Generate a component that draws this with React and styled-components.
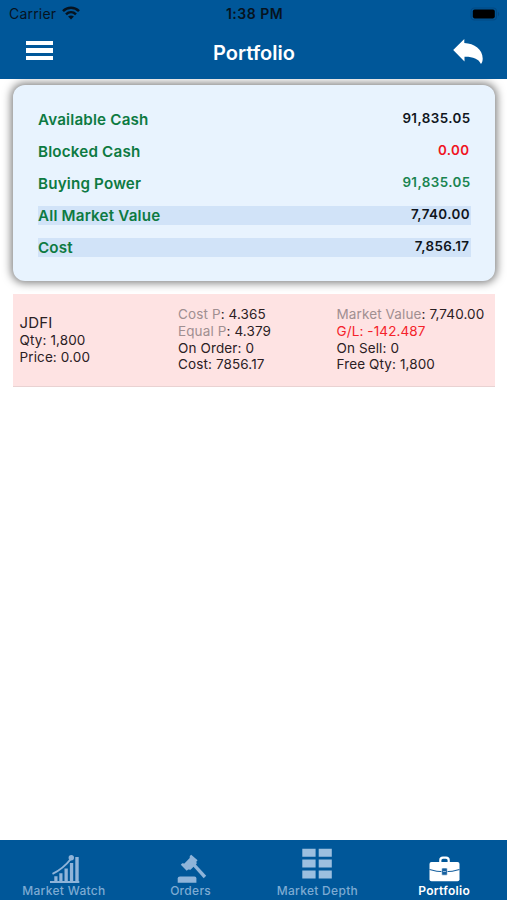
import React from 'react';
import styled, { createGlobalStyle } from 'styled-components';

const balances = [
  { label: 'Available Cash', value: '91,835.05', color: '#10151c' },
  { label: 'Blocked Cash', value: '0.00', color: '#f0141e', inset: 1 },
  { label: 'Buying Power', value: '91,835.05', color: '#198450' },
  { label: 'All Market Value', value: '7,740.00', color: '#10151c', inset: 0.5, marked: true },
  { label: 'Cost', value: '7,856.17', color: '#10151c', inset: 1, marked: true },
];

const WifiIcon = () => (
  <svg width="18" height="14" viewBox="0 0 18 14">
    <g fill="none" stroke="#06131f" strokeWidth="2.5">
      <path d="M1 5.2C5.5 .7 12.5 .7 17 5.2" />
      <path d="M4 8.4c2.9-2.8 7.1-2.8 10 0" />
    </g>
    <path d="M6.1 10.5c1.7-1.5 4.1-1.5 5.8 0L9 13.5z" fill="#06131f" />
  </svg>
);

const BatteryIcon = () => (
  <svg width="30" height="14" viewBox="0 0 30 14">
    <rect x="1" y="1" width="25.5" height="12" rx="3.5" fill="none" stroke="#034a83" strokeWidth="1.1" />
    <rect x="2.8" y="2.6" width="22" height="8.8" rx="1.8" fill="#000" />
    <path d="M28 4.8c1.6.7 1.6 3.7 0 4.4z" fill="#034a83" />
  </svg>
);

const BackIcon = () => (
  <svg width="32" height="28" viewBox="0 0 32 28">
    <path d="M1.2 12L12.300 1v4C22.500 5.300 30.600 11.500 30.700 20.500c0 2-.4 3.900-1.700 5.500C26.300 20.500 20.500 18.600 12.500 18.800v4.800z" fill="#fff" />
  </svg>
);

const ChartIcon = () => (
  <svg width="30" height="30" viewBox="0 0 30 30">
    <path d="M0 27h29.300v1.900H0zM4.300 22.300h3.200v4.900H4.300zM9.300 19.300h3.200v7.900H9.300zM14.500 14.500h3.300v12.700h-3.300zM19.900 9h3.300v18.200h-3.300zM25.300 3h3.400v24.200h-3.400z" fill="#8fb4d9" />
    <path d="M2.500 19.800C10 16.500 16.500 10.500 21.300 4.500" fill="none" stroke="#8fb4d9" strokeWidth="2" />
    <circle cx="21.300" cy="3.700" r="2.700" fill="#8fb4d9" />
  </svg>
);

const GavelIcon = () => (
  <svg width="30" height="30" viewBox="0 0 30 30">
    <g fill="#8fb4d9">
      <path d="M14.200.8l6.400 5.500-1.200 1.300.3 2.200-6.200 6-2.300-.2-1.500 1.200-5.900-6 1.400-1.500 2.200.1 5.300-5.400.1-2z" />
      <path d="M14.700 10.800l2.300-2.300L29.200 21.800l-2.500 2.500z" />
      <path d="M3 22.500h14.500q1.900 0 1.900 1.900v4.400H.7v-4.400q0-1.900 2.300-1.900z" />
    </g>
  </svg>
);

const GridIcon = () => (
  <svg width="30" height="31" viewBox="0 0 30 31">
    <path d="M.3.700h13.300v8H.3zM16.700.700h13.100v8H16.700zM.3 11.500h13.300v8H.3zM16.700 11.500h13.100v8H16.700zM.3 22.500h13.300v8H.3zM16.700 22.500h13.100v8H16.700z" fill="#9cbfdf" />
  </svg>
);

const BriefcaseIcon = () => (
  <svg width="31" height="26" viewBox="0 0 31 26">
    <path d="M11.300 6.500V4.200Q11.300 1.600 14 1.600h3q2.700 0 2.700 2.600v2.300" fill="none" stroke="#fff" strokeWidth="2.200" />
    <rect x=".5" y="6" width="30" height="19.300" rx="2" fill="#fff" />
    <path d="M.5 13.400q7 2.400 15 2.400t15-2.400" fill="none" stroke="#155f9e" strokeWidth="1.100" />
    <rect x="12.700" y="12" width="5.600" height="7.200" rx="1" fill="#155f9e" stroke="#fff" strokeWidth=".6" />
    <path d="M14 15.500h3" stroke="#8fb4d9" strokeWidth="1" />
  </svg>
);

const tabs = [
  { name: 'Market Watch', Icon: ChartIcon, gap: 0, nudge: 2 },
  { name: 'Orders', Icon: GavelIcon, gap: 0, nudge: 2 },
  { name: 'Market Depth', Icon: GridIcon, gap: 5 },
  { name: 'Portfolio', Icon: BriefcaseIcon, gap: 2.5 },
];

export default function App() {
  return (
    <Screen>
      <GlobalStyle />
      <Header>
        <StatusBar>
          <Carrier>Carrier <WifiIcon /></Carrier>
          <Clock>1:38 PM</Clock>
          <Battery><BatteryIcon /></Battery>
        </StatusBar>
        <NavBar>
          <MenuButton aria-label="Menu"><i /><i /><i /></MenuButton>
          <Title>Portfolio</Title>
          <BackButton aria-label="Back"><BackIcon /></BackButton>
        </NavBar>
      </Header>
      <Content>
        <BalanceCard>
          {balances.map(({ label, value, color, inset, marked }) => (
            <BalanceRow key={ label } $marked={ marked }>
              <BalanceLabel>{ label }</BalanceLabel>
              <BalanceValue $color={ color } $inset={ inset }>{ value }</BalanceValue>
            </BalanceRow>
          ))}
        </BalanceCard>
        <Position>
          <Column>
            <Symbol>JDFI</Symbol>
            <Line>Qty: 1,800</Line>
            <Line>Price: 0.00</Line>
          </Column>
          <Column>
            <Line><Muted>Cost P</Muted>: 4.365</Line>
            <Line><Muted>Equal P</Muted>: 4.379</Line>
            <Line>On Order: 0</Line>
            <Line>Cost: 7856.17</Line>
          </Column>
          <Column>
            <Line><Muted>Market Value</Muted>: 7,740.00</Line>
            <Line $loss>G/L: -142.487</Line>
            <Line>On Sell: 0</Line>
            <Line>Free Qty: 1,800</Line>
          </Column>
        </Position>
      </Content>
      <TabBar>
        {tabs.map(({ name, Icon, gap, nudge }) => (
          <Tab key={ name } $active={ name === 'Portfolio' } $gap={ gap } $nudge={ nudge }>
            <Icon />
            <span>{ name }</span>
          </Tab>
        ))}
      </TabBar>
    </Screen>
  );
}

const GlobalStyle = createGlobalStyle`
  body {
    margin: 0;
    background: #fff;
    font-family: Inter, "Liberation Sans", sans-serif;
  }
  * {
    box-sizing: border-box;
  }
  svg {
    display: block;
    flex: none;
  }
`;

const Screen = styled.div`
  display: flex;
  flex-direction: column;
  height: 900px;
  overflow: hidden;
`;

const Header = styled.header`
  height: 79px;
  flex: none;
  background: #005799;
`;

const StatusBar = styled.div`
  display: grid;
  grid-template-columns: 1fr auto 1fr;
  align-items: center;
  height: 27px;
  padding: 0 7px 0 9px;
  color: #06131f;
`;
const Carrier = styled.div`
  display: flex;
  align-items: center;
  gap: 6px;
  font-size: 14px;
  letter-spacing: 0.2px;
  svg {
    margin-top: -2px;
  }
`;
const Clock = styled.div`
  font-size: 14px;
  font-weight: 600;
  letter-spacing: 0.5px;
`;
const Battery = styled.div`
  justify-self: end;
`;

const NavBar = styled.nav`
  display: grid;
  grid-template-columns: 1fr auto 1fr;
  align-items: center;
  height: 50px;
  padding: 0 23px 0 26px;
`;
const MenuButton = styled.button`
  display: flex;
  flex-direction: column;
  gap: 3px;
  width: 27px;
  padding: 0;
  margin-top: -3px;
  border: 0;
  background: none;
  i {
    height: 4.5px;
    background: #fff;
  }
`;
const Title = styled.h1`
  margin: 1px 2px 0 0;
  color: #fff;
  font-size: 20px;
  font-weight: 600;
`;
const BackButton = styled.button`
  justify-self: end;
  padding: 0;
  border: 0;
  background: none;
`;

const Content = styled.main`
  flex: 1;
  padding: 6px 12.5px 0 13px;
`;

const BalanceCard = styled.section`
  display: flex;
  flex-direction: column;
  gap: 13.3px;
  height: 196px;
  padding: 24.5px 24px 0 25px;
  border-radius: 12px;
  background: #e8f3fe;
  box-shadow: 0 0 9px 1.5px rgba(0, 0, 0, 0.5);
  clip-path: inset(-6px -20px -20px -20px);
`;
const BalanceRow = styled.div`
  display: flex;
  justify-content: space-between;
  height: 18.8px;
  background: ${({ $marked }) => $marked ? '#d1e3f8' : 'transparent'};
`;
const BalanceLabel = styled.span`
  color: #0d7a42;
  font-size: 15.2px;
  font-weight: 600;
  line-height: 20px;
  letter-spacing: 0.18px;
`;
const BalanceValue = styled.span`
  margin-right: ${({ $inset }) => $inset || 0}px;
  color: ${({ $color }) => $color};
  font-size: 13.4px;
  font-weight: 600;
  line-height: 17px;
  letter-spacing: 0.4px;
`;

const Position = styled.section`
  display: grid;
  grid-template-columns: 158.5px 158.5px 1fr;
  align-items: center;
  height: 93px;
  margin-top: 13px;
  padding: 0 0 1px 6.5px;
  border-bottom: 1px solid #e9d2d2;
  background: #fee3e3;
`;
const Column = styled.div`
  white-space: nowrap;
`;
const Line = styled.div`
  color: ${({ $loss }) => $loss ? '#f5222a' : '#2b2023'};
  font-size: 13.5px;
  line-height: 16.7px;
  letter-spacing: 0.12px;
`;
const Symbol = styled.div`
  color: #2b2023;
  font-size: 15px;
  line-height: 18px;
  letter-spacing: 0.2px;
`;
const Muted = styled.span`
  color: #a08f91;
`;

const TabBar = styled.footer`
  display: grid;
  grid-template-columns: repeat(4, 1fr);
  height: 60px;
  flex: none;
  background: #005799;
`;
const Tab = styled.div`
  display: flex;
  flex-direction: column;
  align-items: center;
  justify-content: flex-end;
  gap: ${({ $gap }) => $gap}px;
  padding: 0 0 2px 1px;
  color: ${({ $active }) => $active ? '#fff' : '#7dabd3'};
  font-size: 12px;
  font-weight: ${({ $active }) => $active ? 600 : 500};
  line-height: 14px;
  letter-spacing: 0.3px;
  svg {
    margin-left: ${({ $nudge }) => $nudge || 0}px;
  }
`;
